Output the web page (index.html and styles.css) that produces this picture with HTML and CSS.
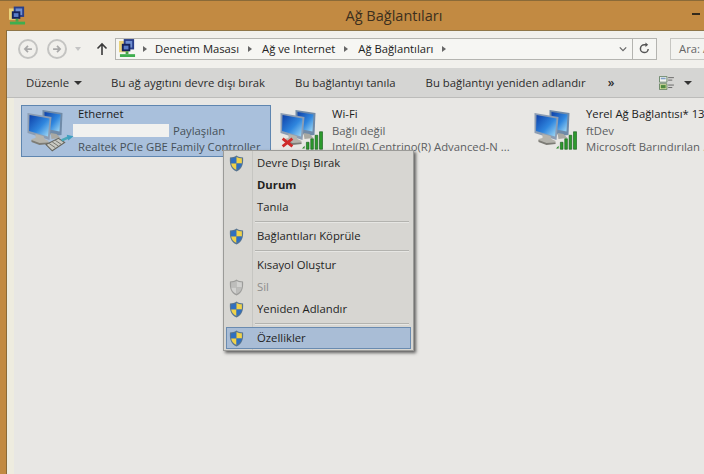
FILE: index.html
```html
<!DOCTYPE html>
<html lang="tr">
<head>
<meta charset="utf-8">
<title>Ağ Bağlantıları</title>
<link rel="stylesheet" href="styles.css">
</head>
<body>
<svg class="defs" width="0" height="0" aria-hidden="true">
  <defs>
    <linearGradient id="scr" x1="0" y1="0" x2="1" y2="1">
      <stop offset="0" stop-color="#0d3fa8"/><stop offset=".55" stop-color="#2f86de"/><stop offset="1" stop-color="#a5dcf5"/>
    </linearGradient>
    <symbol id="monitors" viewBox="0 0 40 38">
      <path d="M17 3l20 3-1 22-8 1-11-6z" fill="#6f8aa8"/>
      <path d="M19 5l16 2.500-1 17-15-3z" fill="url(#scr)"/>
      <path d="M25 26l6 1 4 4-9 1z" fill="#a9a9a3"/>
      <path d="M2 6l24 4-2 23-22-7z" fill="#8c9db3"/>
      <path d="M4 8l20 3.500-1.500 18L3.500 24z" fill="url(#scr)"/>
      <path d="M10 27l8 2 1 3 4 2v2.500l-9 .5-8-3v-2l4-1z" fill="#b5b4ad"/>
      <path d="M6 33l8 3 9-.5v1.500l-9 1-8-3z" fill="#7d7c76"/>
    </symbol>
    <symbol id="bars" viewBox="0 0 24 20">
      <path d="M0 19l3-3v3z" fill="#2c8a2c"/>
      <path d="M5 12h3v8H5zM10 8h3v12h-3zM15 4h3v16h-3zM20 0h3.500v20H20z" fill="#2c9a2c" stroke="#14591a" stroke-width=".7"/>
    </symbol>
    <symbol id="shield" viewBox="0 0 16 18">
      <path d="M8 .5c2 1.500 4.500 2 7 2 .5 7-1 12.500-7 15-6-2.500-7.500-8-7-15 2.500 0 5-.5 7-2z" fill="#57748f"/>
      <path d="M8 2v7H2.300c-.2-2 0-4 0-5.500C4.500 3.500 6.500 3 8 2z" fill="#2f6fc0"/>
      <path d="M8 2c1.500 1 3.500 1.500 5.700 1.500 0 1.500.2 3.500 0 5.500H8z" fill="#f0d24a"/>
      <path d="M2.300 9H8v7C4.500 14.500 2.800 12 2.300 9z" fill="#f0d24a"/>
      <path d="M8 9h5.700C13.200 12 11.500 14.500 8 16z" fill="#2f6fc0"/>
    </symbol>
    <symbol id="shield-off" viewBox="0 0 16 18">
      <path d="M8 .5c2 1.500 4.500 2 7 2 .5 7-1 12.500-7 15-6-2.500-7.500-8-7-15 2.500 0 5-.5 7-2z" fill="#9c9c9a"/>
      <path d="M8 2v7H2.300c-.2-2 0-4 0-5.500C4.500 3.500 6.500 3 8 2z" fill="#bdbdbb"/>
      <path d="M8 2c1.500 1 3.500 1.500 5.700 1.500 0 1.500.2 3.500 0 5.500H8z" fill="#d2d2d0"/>
      <path d="M2.300 9H8v7C4.500 14.500 2.800 12 2.300 9z" fill="#d2d2d0"/>
      <path d="M8 9h5.700C13.200 12 11.500 14.500 8 16z" fill="#bdbdbb"/>
    </symbol>
    <symbol id="folder-net" viewBox="0 0 18 20">
      <path d="M0 2h10v12H0z" fill="#e9d27a"/>
      <path d="M5 0h11v11H5z" fill="#2a3f8a"/>
      <path d="M7 2h7v7H7z" fill="#6f8fd0"/>
      <path d="M3 5h9v8H3z" fill="#14225a"/>
      <path d="M5 7h5v4H5z" fill="#5a7cc8"/>
      <path d="M7 13h3v3H7z" fill="#4aa24a"/>
      <path d="M1 16h16v3H1z" fill="#3fae4f"/>
    </symbol>
  </defs>
</svg>

<div class="window">
  <header class="titlebar">
    <svg class="title-icon"><use href="#folder-net"/></svg>
    <h1 class="title">Ağ Bağlantıları</h1>
    <span class="minimize"></span>
  </header>

  <div class="frame">
    <nav class="navbar">
      <span class="round-btn">
        <svg viewBox="0 0 16 16"><path d="M12.500 8h-8M8 4.500L4.500 8 8 11.500" fill="none" stroke="#a8a8a8" stroke-width="2"/></svg>
      </span>
      <span class="round-btn">
        <svg viewBox="0 0 16 16"><path d="M3.500 8h8M8 4.500L11.500 8 8 11.500" fill="none" stroke="#a8a8a8" stroke-width="2"/></svg>
      </span>
      <span class="nav-drop"></span>
      <svg class="up-arrow" viewBox="0 0 12 14"><path d="M6 13V2M1.500 6.500L6 2l4.500 4.500" fill="none" stroke="#3a3a3a" stroke-width="1.600"/></svg>
      <div class="address">
        <svg class="addr-icon"><use href="#folder-net"/></svg>
        <span class="crumb-arrow first"></span>
        <span class="crumb">Denetim Masası</span>
        <span class="crumb-arrow"></span>
        <span class="crumb">Ağ ve Internet</span>
        <span class="crumb-arrow"></span>
        <span class="crumb">Ağ Bağlantıları</span>
        <span class="crumb-arrow"></span>
        <span class="addr-fill"></span>
        <svg class="chevron" viewBox="0 0 10 6"><path d="M1 1l4 4 4-4" fill="none" stroke="#666" stroke-width="1.500"/></svg>
        <span class="refresh">
          <svg viewBox="0 0 14 14"><path d="M11 7.500A4.200 4.200 0 1 1 7 3h2" fill="none" stroke="#555" stroke-width="1.600"/><path d="M8 .5L11 3 8 5.500z" fill="#555"/></svg>
        </span>
      </div>
      <div class="search">Ara: A</div>
    </nav>

    <div class="commandbar">
      <span class="cmd cmd-first">Düzenle</span><span class="caret"></span>
      <span class="cmd cmd-a">Bu ağ aygıtını devre dışı bırak</span>
      <span class="cmd cmd-b">Bu bağlantıyı tanıla</span>
      <span class="cmd cmd-b">Bu bağlantıyı yeniden adlandır</span>
      <span class="cmd more">»</span>
      <svg class="view-icon" viewBox="0 0 18 17">
        <path d="M.5.500h9v7h-9z" fill="#f4f4f0" stroke="#5a7a5a"/><path d="M2 2h6v2H2z" fill="#7fa0c8"/>
        <path d="M.5 9.500h9v7h-9z" fill="#e4e8a8" stroke="#5a7a5a"/><path d="M2 11h6v4H2z" fill="#4f8a3f"/>
        <path d="M11 2h7M11 5h5M11 11h7M11 14h5" stroke="#555"/>
      </svg>
      <span class="caret view-caret"></span>
    </div>

    <main class="content">
      <section class="adapter selected">
        <div class="adapter-icon">
          <svg class="monitors"><use href="#monitors"/></svg>
          <svg class="cable" viewBox="0 0 28 17">
            <path d="M1 10l12-6 6 4-12 8z" fill="#c9c9c2" stroke="#66665f"/>
            <path d="M4 9l6 4M7 7.500l6 4M10 6l6 4" stroke="#66665f" stroke-width=".8"/>
            <path d="M16 6l7-3" stroke="#4aa8b8" stroke-width="2.500"/>
            <path d="M21 .5l6.500 1.500-5 4z" fill="#3f9fc0"/>
          </svg>
        </div>
        <div class="adapter-text">
          <div class="name">Ethernet</div>
          <div class="status"><span class="redact"></span><span class="shared">Paylaşılan</span></div>
          <div class="device">Realtek PCIe GBE Family Controller</div>
        </div>
      </section>

      <section class="adapter wifi">
        <div class="adapter-icon">
          <svg class="monitors"><use href="#monitors"/></svg>
          <svg class="x-mark" viewBox="0 0 12 10"><path d="M1.500 1.500l9 7M10.500 1.500l-9 7" stroke="#cf2a2a" stroke-width="2.600"/></svg>
          <svg class="bars"><use href="#bars"/></svg>
        </div>
        <div class="adapter-text">
          <div class="name">Wi-Fi</div>
          <div class="status">Bağlı değil</div>
          <div class="device">Intel(R) Centrino(R) Advanced-N ...</div>
        </div>
      </section>

      <section class="adapter local">
        <div class="adapter-icon">
          <svg class="monitors"><use href="#monitors"/></svg>
          <svg class="bars"><use href="#bars"/></svg>
        </div>
        <div class="adapter-text">
          <div class="name">Yerel Ağ Bağlantısı* 13</div>
          <div class="status">ftDev</div>
          <div class="device">Microsoft Barındırılan ...</div>
        </div>
      </section>
    </main>
  </div>
</div>

<div class="menu">
  <div class="menu-item"><svg class="shield"><use href="#shield"/></svg>Devre Dışı Bırak</div>
  <div class="menu-item strong">Durum</div>
  <div class="menu-item">Tanıla</div>
  <div class="menu-sep"></div>
  <div class="menu-item"><svg class="shield"><use href="#shield"/></svg>Bağlantıları Köprüle</div>
  <div class="menu-sep"></div>
  <div class="menu-item">Kısayol Oluştur</div>
  <div class="menu-item disabled"><svg class="shield"><use href="#shield-off"/></svg>Sil</div>
  <div class="menu-item"><svg class="shield"><use href="#shield"/></svg>Yeniden Adlandır</div>
  <div class="menu-sep"></div>
  <div class="menu-item active"><svg class="shield"><use href="#shield"/></svg>Özellikler</div>
</div>
</body>
</html>
```

FILE: styles.css
```css
* { box-sizing: border-box; }
html, body { margin: 0; height: 100%; }
body {
  width: 704px;
  height: 474px;
  overflow: hidden;
  position: relative;
  font-family: "Open Sans", "Noto Sans", "Liberation Sans", sans-serif;
  font-size: 11.3px;
  color: #222;
  background: #c28a42;
}
.defs { position: absolute; }
.window {
  height: 100%;
  display: flex;
  flex-direction: column;
  border-top: 1px solid #8a6a38;
}
.titlebar {
  height: 29px;
  flex: none;
  display: flex;
  align-items: center;
  position: relative;
  padding-left: 9px;
  background: #c28a42;
}
.title-icon { width: 17px; height: 20px; flex: none; }
.title {
  flex: 1;
  margin: 0 0 0 58px;
  text-align: center;
  font-size: 14.500px;
  font-weight: 400;
  color: #3c2f1e;
}
.minimize {
  position: absolute;
  right: 4px;
  top: 12px;
  width: 8px;
  height: 2px;
  background: #332a1c;
}
.frame {
  flex: 1;
  margin-left: 6px;
  display: flex;
  flex-direction: column;
  border-left: 1px solid #8a6a38;
  border-top: 1px solid #8f7648;
  min-height: 0;
}
.navbar {
  height: 37px;
  flex: none;
  display: flex;
  align-items: center;
  padding: 0 0 2px 11px;
  background: #f1f0ec;
}
.round-btn {
  width: 20px;
  height: 20px;
  border: 2px solid #c4c4c2;
  border-radius: 50%;
  margin-right: 9px;
  display: flex;
  align-items: center;
  justify-content: center;
}
.round-btn svg { width: 14px; height: 14px; }
.nav-drop {
  width: 0;
  height: 0;
  border: 3px solid transparent;
  border-top: 4px solid #c4c4c4;
  margin: 3px 0 0 -1px;
}
.up-arrow { width: 12px; height: 14px; margin-left: 15px; flex: none; }
.address {
  width: 542px;
  flex: none;
  height: 22px;
  margin-left: 7px;
  display: flex;
  align-items: center;
  border: 1px solid #b4b4b0;
  background: #f6f6f3;
  font-size: 11.250px;
  padding-left: 3px;
}
.addr-icon { width: 17px; height: 19px; flex: none; }
.crumb-arrow {
  width: 0;
  height: 0;
  border: 3.500px solid transparent;
  border-left: 4px solid #666;
  border-right: 0;
  margin: 0 10px 0 9px;
}
.crumb-arrow.first { margin-left: 7px; margin-right: 8px; }
.crumb { color: #222; white-space: nowrap; }
.addr-fill { flex: 1; }
.chevron { width: 8px; height: 6px; margin-right: 5px; }
.refresh {
  width: 24px;
  height: 100%;
  display: flex;
  align-items: center;
  justify-content: center;
  border-left: 1px solid #b4b4b0;
}
.refresh svg { width: 13px; height: 13px; }
.search {
  flex: 1;
  height: 22px;
  margin-left: 13px;
  padding: 2px 0 0 8px;
  border: 1px solid #c6c6c2;
  border-right: 0;
  background: #f3f3f0;
  color: #666;
  overflow: hidden;
  white-space: nowrap;
}
.commandbar {
  height: 30px;
  flex: none;
  display: flex;
  align-items: center;
  padding-left: 19px;
  background: #d5d5d3;
  border-bottom: 1px solid #bcbcba;
  font-size: 11.350px;
  color: #2c2c2c;
  white-space: nowrap;
}
.caret {
  width: 0;
  height: 0;
  border: 4px solid transparent;
  border-top: 4px solid #333;
  border-bottom: 0;
  margin-left: 5px;
}
.cmd-a { margin-left: 29px; }
.cmd-b { margin-left: 30px; }
.more { margin-left: 22px; font-size: 12px; font-weight: 600; line-height: 1; }
.view-icon { width: 15px; height: 14px; margin-left: 45px; flex: none; }
.view-caret { margin-left: 10px; }
.content {
  flex: 1;
  display: flex;
  align-items: flex-start;
  padding: 7px 0 0 14px;
  background: #e8e7e4;
  box-shadow: inset 7px 0 0 #eeecdf;
  min-height: 0;
  overflow: hidden;
}
.adapter {
  flex: none;
  height: 52px;
  display: flex;
  padding: 0 0 0 3px;
  border: 1px solid transparent;
}
.adapter.selected {
  width: 250px;
  background: #a9c0dc;
  border-color: #5f86b0;
}
.wifi { width: 254px; margin-left: 3px; padding-left: 3px; }
.local { margin-left: 3px; padding-left: 0; }
.adapter-icon { width: 53px; position: relative; flex: none; }
.wifi .adapter-icon, .local .adapter-icon { width: 54px; }
.monitors { position: absolute; left: 0; top: 1px; width: 41px; height: 38px; }
.cable { position: absolute; left: 20px; top: 28px; width: 29px; height: 18px; }
.x-mark { position: absolute; left: 3px; top: 31px; width: 13px; height: 11px; }
.bars { position: absolute; left: 24px; top: 25px; width: 21px; height: 19px; }
.adapter-text { line-height: 16.500px; white-space: nowrap; min-width: 0; }
.name { color: #1c1c1c; }
.status, .device { color: #5c6062; }
.selected .status, .selected .device { color: #465058; }
.status { display: flex; align-items: center; }
.redact {
  width: 96px;
  height: 13px;
  margin-left: -5px;
  background: #f1f1ef;
}
.shared { margin-left: 4px; }
.menu {
  position: absolute;
  left: 223px;
  top: 150px;
  width: 191px;
  height: 201px;
  padding: 1px 2px;
  background: #d7d6d2;
  border: 1px solid #9b9b98;
  box-shadow: 2px 2px 3px rgba(50, 50, 50, .75);
  color: #1f1f1f;
}
.menu::before {
  content: "";
  position: absolute;
  left: 28px;
  top: 0;
  bottom: 0;
  border-left: 1px solid #c6c6c2;
}
.menu-item {
  height: 22px;
  display: flex;
  align-items: center;
  padding: 0 0 2px 31px;
  position: relative;
}
.menu-sep {
  height: 1px;
  margin: 3px 2px 3px 29px;
  background: #b3b3af;
  box-shadow: 0 1px 0 #e6e6e3;
}
.strong { font-weight: 700; }
.disabled { color: #8d8d8b; }
.active {
  background: #a9bdd6;
  border: 1px solid #6a8bb0;
  padding-left: 30px;
}
.shield {
  position: absolute;
  left: 3px;
  top: 3px;
  width: 15px;
  height: 17px;
}
.active .shield { left: 2px; top: 2px; }
```
